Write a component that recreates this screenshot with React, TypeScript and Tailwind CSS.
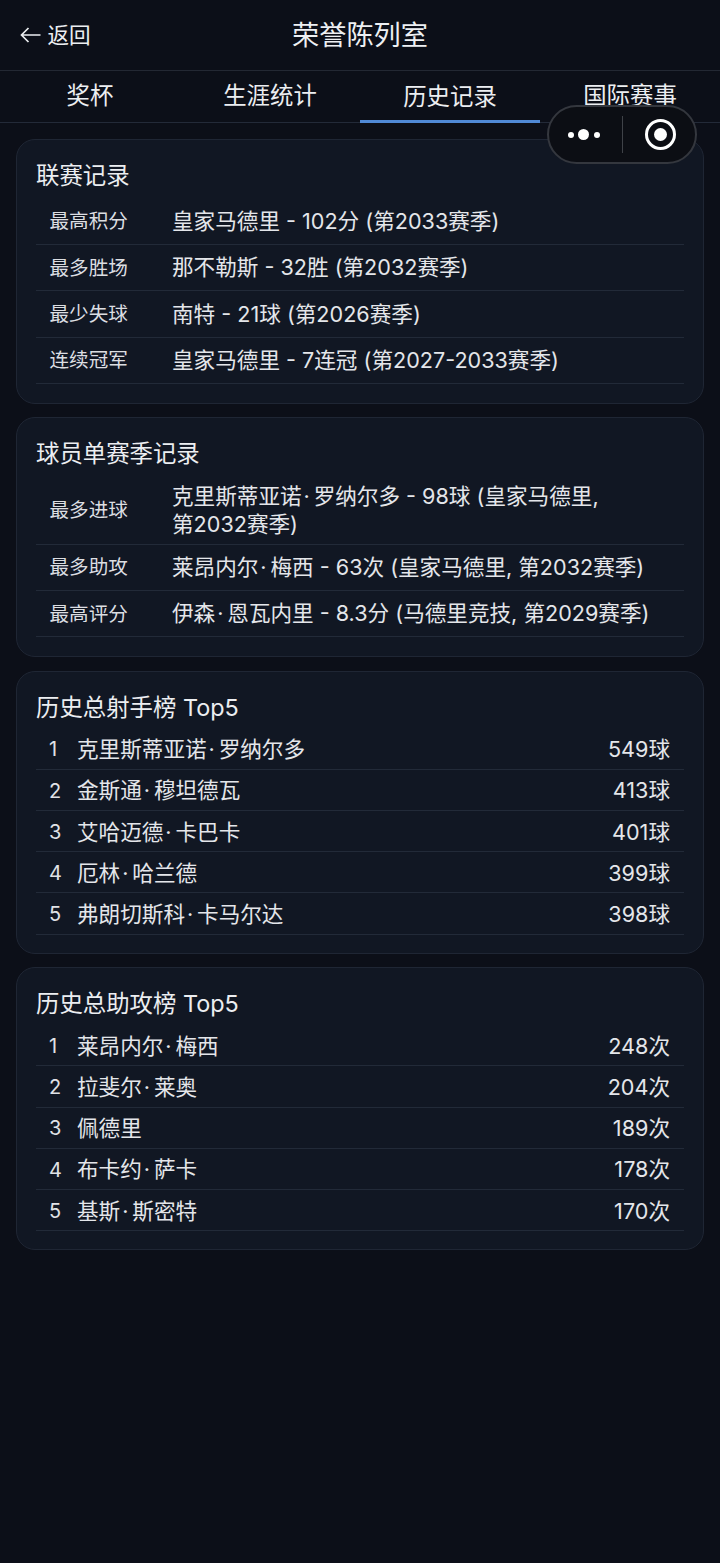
import React from "react";

const leagues = [
  ["最高积分", "皇家马德里 - 102分 (第2033赛季)"],
  ["最多胜场", "那不勒斯 - 32胜 (第2032赛季)"],
  ["最少失球", "南特 - 21球 (第2026赛季)"],
  ["连续冠军", "皇家马德里 - 7连冠 (第2027-2033赛季)"],
];
const players = [
  ["最多进球", "克里斯蒂亚诺\u200a·\u2009罗纳尔多 - 98球 (皇家马德里,\n第2032赛季)"],
  ["最多助攻", "莱昂内尔\u200a·\u2009梅西 - 63次 (皇家马德里, 第2032赛季)"],
  ["最高评分", "伊森\u200a·\u2009恩瓦内里 - 8.3分 (马德里竞技, 第2029赛季)"],
];
const scorers = [
  ["克里斯蒂亚诺\u200a·\u2009罗纳尔多", "549球"],
  ["金斯通\u200a·\u2009穆坦德瓦", "413球"],
  ["艾哈迈德\u200a·\u2009卡巴卡", "401球"],
  ["厄林\u200a·\u2009哈兰德", "399球"],
  ["弗朗切斯科\u200a·\u2009卡马尔达", "398球"],
];
const assists = [
  ["莱昂内尔\u200a·\u2009梅西", "248次"],
  ["拉斐尔\u200a·\u2009莱奥", "204次"],
  ["佩德里", "189次"],
  ["布卡约\u200a·\u2009萨卡", "178次"],
  ["基斯\u200a·\u2009斯密特", "170次"],
];

function Card({ title, rank, children }: { title: string; rank?: boolean; children: React.ReactNode }) {
  return (
    <section className={rank ? "rounded-[19px] border border-[#1f2634] bg-[#111723] px-[19px] pt-[20px] pb-[18px]" : "rounded-[19px] border border-[#1f2634] bg-[#111723] px-[19px] pt-[20px] pb-[18.6px]"}>
      <h2 className={rank ? "text-[23.4px] leading-[32px] font-normal text-[#eceef1] mb-[5.1px]" : "text-[23.4px] leading-[32px] font-normal text-[#eceef1] mb-[6.5px]"}>{title}</h2>
      {children}
    </section>
  );
}

function RecordRow({ label, value }: { label: string; value: string }) {
  return (
    <div className="flex items-center border-b border-[#222a38] pl-[13.5px] pr-[14px] py-[5px] min-h-[46.4px]">
      <div className="w-[122.5px] shrink-0 text-[19.6px] leading-[28px] text-[#dcdee2]">{label}</div>
      <div className="flex-1 text-[21.6px] leading-[28.5px] text-[#e4e6ea] whitespace-pre-line">{value}</div>
    </div>
  );
}

function RankRow({ n, name, value }: { n: number; name: string; value: string }) {
  return (
    <div className="flex items-center h-[41.2px] border-b border-[#222a38] pl-[13px] pr-[14px] pt-[1.5px] text-[21.6px] text-[#e4e6ea]">
      <div className="w-[28px] shrink-0 text-[20px] text-[#e0e2e6]">{n}</div>
      <div className="flex-1">{name}</div>
      <div>{value}</div>
    </div>
  );
}

export default function App() {
  return (
    <div
      className="relative w-[720px] h-[1563px] overflow-hidden bg-[#0c0f18] text-white"
      style={{ fontFamily: '"Inter", "Noto Sans CJK SC", sans-serif' }}
    >
      <header className="relative flex items-center justify-center h-[71px] border-b border-[#232833]">
        <div className="absolute left-[20px] top-[21px] flex items-center gap-[6.5px] text-[21.6px] leading-[28px] text-[#eceef1]">
          <svg width="21" height="16" viewBox="0 0 21 16" fill="none" stroke="currentColor" strokeWidth="1.7">
            <path d="M20.5 8H1.5M8.5 1L1.5 8l7 7" />
          </svg>
          <span>返回</span>
        </div>
        <h1 className="text-[27.2px] leading-[36px] font-normal text-[#eef0f3] pt-[2px]">荣誉陈列室</h1>
      </header>

      <nav className="flex h-[52px] border-b border-[#232a38]">
        {["奖杯", "生涯统计", "历史记录", "国际赛事"].map((t, i) => (
          <div
            key={t}
            className={
              i === 2
                ? "flex-1 flex items-center justify-center text-[23.4px] text-[#eceef1] border-b-[3px] border-[#5089d6] h-[52px] pt-[2px]"
                : "flex-1 flex items-center justify-center text-[23.4px] text-[#eceef1] pb-[1px]"
            }
          >
            {t}
          </div>
        ))}
      </nav>

      <main className="flex flex-col gap-[13.5px] pl-[16px] pr-[16px] pt-[16px]">
        <Card title="联赛记录">
          {leagues.map(([l, v]) => <RecordRow key={l} label={l} value={v} />)}
        </Card>
        <Card title="球员单赛季记录">
          {players.map(([l, v]) => <RecordRow key={l} label={l} value={v} />)}
        </Card>
        <Card title="历史总射手榜 Top5" rank>
          {scorers.map(([n, v], i) => <RankRow key={n} n={i + 1} name={n} value={v} />)}
        </Card>
        <Card title="历史总助攻榜 Top5" rank>
          {assists.map(([n, v], i) => <RankRow key={n} n={i + 1} name={n} value={v} />)}
        </Card>
      </main>

      <div className="absolute left-[547px] top-[105px] w-[150px] h-[59px] rounded-full border-2 border-[#34373e] bg-[#0c0e14] flex items-center">
        <div className="w-[73px] flex items-center justify-center gap-[4.5px] pr-[4px]">
          <span className="w-[6px] h-[6px] rounded-full bg-white" />
          <span className="w-[11px] h-[11px] rounded-full bg-white" />
          <span className="w-[6px] h-[6px] rounded-full bg-white" />
        </div>
        <div className="w-px h-[37px] bg-[#3f4248]" />
        <div className="flex-1 flex items-center justify-center pl-[3px]">
          <div className="w-[31px] h-[31px] rounded-full border-[3.5px] border-white flex items-center justify-center">
            <span className="w-[13px] h-[13px] rounded-full bg-white" />
          </div>
        </div>
      </div>
    </div>
  );
}
